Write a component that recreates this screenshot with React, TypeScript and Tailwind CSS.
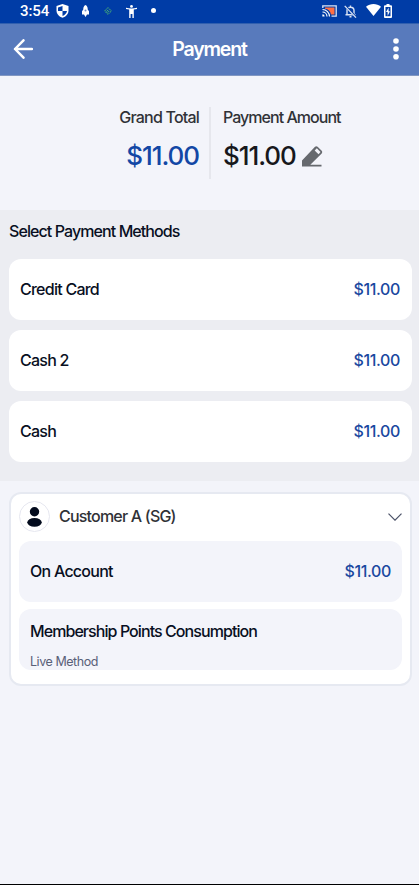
const methods = [
    { name: "Credit Card", amount: "$11.00" },
    { name: "Cash 2", amount: "$11.00" },
    { name: "Cash", amount: "$11.00" },
];

const StatusBar = () => {
    return (
        <div className="flex h-[23px] items-center bg-[#003ca6] pl-5 text-white">
            <span className="w-[30px] whitespace-nowrap font-[Roboto] text-[15px] leading-[21px] tracking-[-0.1px] font-medium">3:54</span>
            <svg className="ml-[6px] mb-[2px] h-[14px] w-[13px]" viewBox="0 0 13 14">
                <path d="M6.5 0 12.5 2v4.5c0 3.5-2.6 6.2-6 7.3C3.1 12.7.5 10 .5 6.5V2z" fill="#fff" />
                <path d="M6.5 2v5H2V3.4zM6.5 7H11c-.4 2.4-2.2 4.2-4.5 5z" fill="#003ca6" />
            </svg>
            <svg className="ml-3 mb-[2px] h-[12px] w-[9px]" viewBox="0 0 9 12">
                <path d="M4.5 0C6.300 1 6.800 2.500 6.700 4.500L8 6.300V9.500H6L4.500 12 3 9.500H1V6.300l1.300-1.800C2.200 2.500 2.700 1 4.500 0z" fill="#fff" />
                <circle cx="4.5" cy="5.500" r="1" fill="#6f8fcd" />
            </svg>
            <svg className="ml-[14px] mb-[2px] h-[8px] w-[8px]" viewBox="0 0 8 8">
                <path d="M.6 4 4 .6 7.400 4 4 7.400zM2.500 4.600 4.600 2.500M3.600 5.600l2-2" fill="none" stroke="#4cb573" strokeWidth="1" strokeDasharray="2.400 .8" />
            </svg>
            <svg className="ml-[14px] mb-[1px] h-[13px] w-[11px]" viewBox="0 0 11 13">
                <circle cx="5.5" cy="1.4" r="1.4" fill="#fff" />
                <path d="M0 2.800c3.500.9 7.500.9 11 0v1.200c-1 .3-2 .5-3.200.6V13H6.400V9H4.600v4H3.200V4.600C2 4.500 1 4.300 0 4z" fill="#fff" />
            </svg>
            <span className="ml-[14px] mb-[2px] h-[5px] w-[5px] rounded-full bg-white" />
            <svg className="ml-auto mb-[2px] h-[12px] w-[15px]" viewBox="0 0 15 12">
                <path d="M3 2.500h9.500v7H9A7 7 0 0 0 3 3.800z" fill="#ff6f43" />
                <path d="M.8 3V.8h13.400v10.400H9.500" fill="none" stroke="#dbe4f4" strokeWidth="1.3" />
                <path d="M.5 4.500A7 7 0 0 1 7.500 11.500M.5 7A4.500 4.500 0 0 1 5 11.500" fill="none" stroke="#fff" strokeWidth="1.2" />
                <path d="M.4 9.300a2.300 2.300 0 0 1 2.300 2.300H.4z" fill="#fff" />
            </svg>
            <svg className="ml-[7px] mb-[1px] h-[13px] w-[13px]" viewBox="0 0 13 13">
                <path d="M3 9.500V5.500C3 3.500 4.500 2.200 6.500 2.200S10 3.500 10 5.500v4M1.500 9.800h10M6.500.5v1.500M5.500 11.800h2" fill="none" stroke="#dbe4f4" strokeWidth="1.4" />
                <path d="M1.200.8l11 11.600" stroke="#003ca6" strokeWidth="2.2" />
                <path d="M.7.9l11.300 11.700" stroke="#dbe4f4" strokeWidth="1.3" />
            </svg>
            <svg className="ml-[9px] mb-[3px] h-[12px] w-[15px]" viewBox="0 0 15 12">
                <path d="M0 2.700C4.300-.9 10.700-.9 15 2.700L7.500 12z" fill="#fff" />
            </svg>
            <svg className="ml-[3px] mr-[27px] mb-[2px] h-[14px] w-[8px]" viewBox="0 0 8 14">
                <path d="M2.500 0h3v1.200H7q1 0 1 1V13q0 1-1 1H1q-1 0-1-1V2.200q0-1 1-1h1.500z" fill="#fff" />
                <path d="M1.500 3h5v9.200h-5z" fill="#003ca6" />
                <path d="M4.600 3.500 2 8h1.600v4L6 7.200H4.600z" fill="#fff" />
            </svg>
        </div>
    );
};

const Header = () => {
    return (
        <div className="flex h-[53px] items-center justify-between border-y border-t-[#315fae] border-b-[#8197c2] bg-[#587abc] pr-5 pl-[13px]">
            <svg className="mb-[2px] h-5 w-5" viewBox="0 0 20 20" fill="none" stroke="#fff" strokeWidth="2.5" strokeLinecap="round" strokeLinejoin="round">
                <path d="M10.500 1.300 2 10l8.500 8.700M2 10h17" />
            </svg>
            <h1 className="mr-[7px] mb-[2px] text-[19.5px] leading-6 font-semibold tracking-[-1.2px] text-white">Payment</h1>
            <svg className="mb-[2px] h-[22px] w-[6px]" viewBox="0 0 6 22" fill="#fff">
                <circle cx="3" cy="3" r="2.8" />
                <circle cx="3" cy="11" r="2.8" />
                <circle cx="3" cy="18.8" r="2.8" />
            </svg>
        </div>
    );
};

const Summary = () => {
    return (
        <div className="flex h-[134px] pt-[31px]">
            <div className="w-[209px] pr-[10px] text-right">
                <p className="text-base leading-5 font-[450] tracking-[-0.8px] text-[#303237]">Grand Total</p>
                <p className="mt-[13px] text-[26px] leading-8 font-[480] tracking-[-1.05px] text-[#1247a5]">$11.00</p>
            </div>
            <div className="h-[72px] w-[2px] bg-[#e6e7ed]" />
            <div className="pl-3">
                <p className="text-base leading-5 font-[450] tracking-[-0.97px] text-[#303237]">Payment Amount</p>
                <div className="mt-[13px] flex items-center">
                    <span className="text-[26px] leading-8 font-[480] tracking-[-1.05px] text-[#17181c]">$11.00</span>
                    <svg className="ml-[6px] h-[22px] w-[21px]" viewBox="0 0 21 22">
                        <path d="M0 21.500V15.500L13 1.800q1.300-1.300 2.600 0L19.700 5.800q1.200 1.300 0 2.600L8.300 19.700H19.500v1.800z" fill="#66696e" />
                        <path d="m14.800 3.200 3.700 3.700-2 2.300-3.800-3.700z" fill="#f3f4fa" />
                    </svg>
                </div>
            </div>
        </div>
    );
};

const MethodRow = ({ name, amount, className = "" }: { name: string; amount: string; className?: string }) => {
    return (
        <div className={`flex h-[61.4px] items-center justify-between rounded-xl pb-px text-base font-[480] ${className}`}>
            <span className="tracking-[-0.75px] text-[#080f22]">{name}</span>
            <span className="tracking-[-0.35px] text-[#1a48a0]">{amount}</span>
        </div>
    );
};

const CustomerCard = () => {
    return (
        <div className="mt-[11px] mr-[7px] ml-[9px] h-[194px] rounded-xl border-2 border-[#e6e9f1] bg-white px-2 pt-[7px]">
            <div className="flex h-[31px] items-center">
                <span className="flex h-[31px] w-[31px] items-center justify-center rounded-full border border-[#e6e7f0]">
                    <svg className="h-5 w-[15px]" viewBox="0 0 15 20" fill="#030b1d">
                        <circle cx="7.5" cy="4.8" r="4.7" />
                        <ellipse cx="7.5" cy="15.3" rx="7.2" ry="4.4" />
                    </svg>
                </span>
                <span className="mb-px ml-[9px] text-base font-[450] tracking-[-0.8px] text-[#303237]">Customer A (SG)</span>
                <svg className="ml-auto h-2 w-[14px]" viewBox="0 0 14 8" fill="none" stroke="#4b5268" strokeWidth="1.2">
                    <path d="m.5.700 6.500 6.500L13.500.700" />
                </svg>
            </div>
            <MethodRow name="On Account" amount="$11.00" className="mt-[9px] bg-[#f3f4fa] px-[11px]" />
            <div className="mt-[6.5px] h-[61.4px] overflow-hidden rounded-xl bg-[#f3f4fa] px-[11px] pt-[10px]">
                <p className="text-base leading-6 font-[480] tracking-[-0.93px] text-[#080f22]">Membership Points Consumption</p>
                <p className="mt-[11px] text-[12.5px] leading-4 tracking-[-0.45px] text-[#596078]">Live Method</p>
            </div>
        </div>
    );
};

const App = () => {
    return (
        <div className="flex h-[885px] w-full flex-col border-b border-black bg-[#f3f4fa] font-[Inter,sans-serif]">
            <StatusBar />
            <Header />
            <Summary />
            <div className="h-[271px] bg-[#ecedf2] pt-[9px] pr-[7px] pl-[9px]">
                <h2 className="text-base leading-6 font-[480] tracking-[-0.91px] text-[#080f22]">Select Payment Methods</h2>
                <div className="mt-4 flex flex-col gap-[9.5px]">
                    {methods.map((method) => (
                        <MethodRow key={method.name} {...method} className="bg-white pr-3 pl-[11px]" />
                    ))}
                </div>
            </div>
            <CustomerCard />
        </div>
    );
};

export default App;
